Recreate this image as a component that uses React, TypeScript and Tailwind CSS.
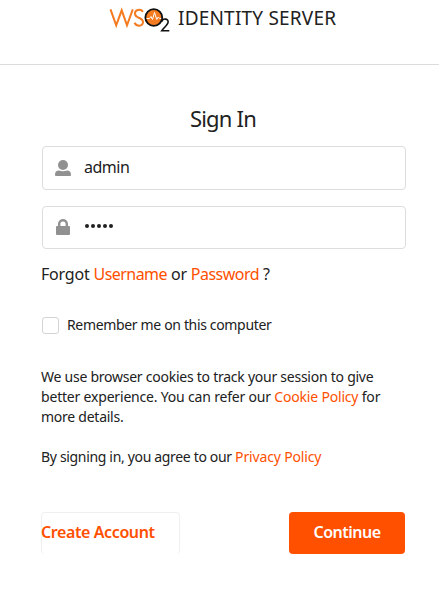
import type { ReactNode } from 'react';

function Link({ children, className = '' }: { children: ReactNode; className?: string }) {
  return <a href="#" className={`text-[#ff5000] ${className}`}>{children}</a>;
}

function Logo() {
  return (
    <svg className="h-8 w-[62px] shrink-0" viewBox="0 0 62 32" fill="none">
      <g stroke="#f47b20" strokeWidth="2">
        <path d="M1.500 6.300 7.200 22.300 12.700 7.300 18 22.300 23.800 6.300" strokeLinejoin="miter" />
        <path d="M34 8.800C32.800 7 31 6.500 29 6.900c-4 .9-4 5.700-.3 7.300 3.200 1.200 5.700 2.500 5.300 5.300-.5 4.200-6.500 4.300-8.500.2" />
      </g>
      <circle cx="44.800" cy="14.500" r="8.400" fill="#f47b20" stroke="#111" strokeWidth="1.900" />
      <path d="M37.500 15.500h3l1.500-2 1.500 3 2-7 2.200 7 1.500-2.500 1.500 1.500h1.500" stroke="#fff" strokeWidth="1" />
      <path d="M52.800 18.500c.8-3.600 6.900-3 6.300.6-.4 2.700-3.700 5.200-6.300 8.600h7.500" stroke="#111" strokeWidth="1.600" />
    </svg>
  );
}

export default function App() {
  return (
    <div className="h-[591px] w-full overflow-hidden bg-white font-['Noto_Sans',sans-serif] text-[#212121]">
      <header className="flex h-[65px] items-start border-b border-[#dcdcdc] pl-[109px] pt-[3px]">
        <Logo />
        <h1 className="ml-[7px] mt-px whitespace-nowrap text-[19px] leading-[28px] tracking-[0.2px]">IDENTITY SERVER</h1>
      </header>
      <main className="pl-[41px] pr-[33px] pt-[38px]">
        <h2 className="pr-px text-center text-[22px] leading-[30px] tracking-[-0.8px]">Sign In</h2>
        <div className="ml-px mt-[13px] flex h-[44px] items-center rounded-[4px] border border-[#dcdddd] pl-[12px]">
          <svg className="h-4 w-4" viewBox="0 0 16 16" fill="#919191">
            <circle cx="8" cy="5" r="5" />
            <path d="M0 14.8C0 12 1.500 10.600 4 10.600c2.400 1 5.600 1 8 0 2.500 0 4 1.400 4 4.200 0 .8-.4 1.200-1.200 1.200H1.200C.4 16 0 15.600 0 14.800Z" />
          </svg>
          <span className="mb-0.5 ml-[13px] text-[16px] leading-5 tracking-[-0.500px]">admin</span>
        </div>
        <div className="ml-px mt-4 flex h-[43px] items-center rounded-[4px] border border-[#dcdddd] pl-[12px]">
          <svg className="mb-px h-4 w-4" viewBox="0 0 16 16" fill="#919191">
            <path d="M3 7V5a5 5 0 0 1 10 0v2h.7c.8 0 1.300.5 1.300 1.300v6.400c0 .8-.5 1.300-1.300 1.300H2.300C1.500 16 1 15.500 1 14.700V8.300C1 7.500 1.500 7 2.300 7H3Zm2.400 0h5.200V5a2.600 2.600 0 0 0-5.200 0v2Z" />
          </svg>
          <span className="mb-[3px] ml-[14px] flex gap-[2px]">
            {[0, 1, 2, 3, 4].map((i) => <i key={i} className="h-1 w-1 rounded-full bg-[#212121]" />)}
          </span>
        </div>
        <p className="mt-[15px] whitespace-nowrap text-[16px] leading-5 tracking-[-0.2px]">
          Forgot <Link className="tracking-[-0.550px]">Username</Link> or <Link className="tracking-[-0.500px]">Password</Link> ?
        </p>
        <label className="ml-px mt-[31px] flex h-5 items-center gap-2">
          <span className="h-[17px] w-[17px] rounded-[3px] border border-[#d4d4d5]" />
          <span className="whitespace-nowrap text-[14px] leading-5 tracking-[-0.340px]">Remember me on this computer</span>
        </label>
        <p className="mt-8 whitespace-nowrap text-[14px] leading-5 tracking-[-0.250px]">
          We use browser cookies to track your session to give<br />
          <span className="tracking-[-0.190px]">better experience. You can refer our <Link className="tracking-[-0.190px]">Cookie Policy</Link> for</span><br />
          more details.
        </p>
        <p className="mt-5 whitespace-nowrap text-[14px] leading-5 tracking-[-0.330px]">
          By signing in, you agree to our <Link className="tracking-[-0.150px]">Privacy Policy</Link>
        </p>
        <div className="mt-[45px] flex h-[42px] justify-between pr-px">
          <a href="#" className="flex w-[139px] items-center whitespace-nowrap rounded-[4px] border border-b-0 border-[#f0f0f0] pb-[3px] text-[16px] font-semibold leading-5 tracking-[-0.400px] text-[#ff5000]"><span className="-ml-px">Create Account</span></a>
          <button className="w-[116px] rounded-[4px] bg-[#ff5000] pb-0.5 text-[16px] font-semibold leading-5 tracking-[-0.500px] text-white">Continue</button>
        </div>
      </main>
    </div>
  );
}
